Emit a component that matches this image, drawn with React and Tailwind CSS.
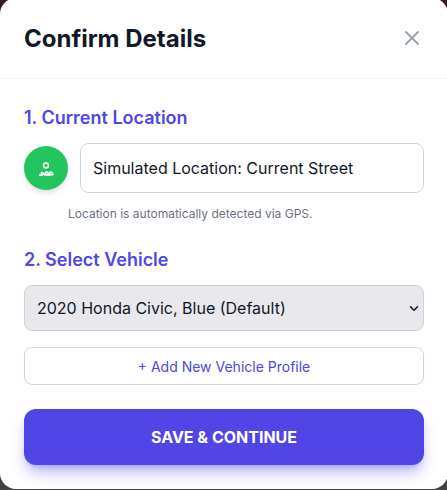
export default function App() {
  return (
    <div className="h-[490px] w-full overflow-hidden bg-linear-to-b from-[#30211e] to-[#424242] font-['Inter',sans-serif]">
      <div className="-mt-0.5 h-[491px] w-[448px] overflow-hidden rounded-2xl bg-white">
        <header className="flex items-center justify-between border-b border-[#f3f4f6] p-6">
          <h2 className="pt-0.5 text-2xl leading-[30px] font-bold text-[#111827]">Confirm Details</h2>
          <button className="text-[#9ca3af]" aria-label="Close">
            <svg className="size-6" fill="none" viewBox="0 0 24 24" stroke="currentColor" strokeWidth="2" strokeLinecap="round" strokeLinejoin="round">
              <path d="M6 18L18 6M6 6l12 12" />
            </svg>
          </button>
        </header>
        <main className="flex flex-col gap-6 p-6">
          <section>
            <h3 className="mb-[11px] pt-px text-lg font-semibold text-[#4f46e5]">1. Current Location</h3>
            <div className="flex items-center gap-3">
              <div className="flex size-11 shrink-0 items-center justify-center rounded-full bg-[#22c55e] text-white shadow-md">
                <svg className="size-5" viewBox="0 0 20 20" fill="none" stroke="currentColor" strokeLinecap="round" strokeLinejoin="round">
                  <circle cx="10" cy="7.5" r="2.4" strokeWidth="1.5" />
                  <path d="M4 16.9c1 .5 2.2.2 2.7-.8M5.4 15c1-.4 1.7.1 2.2.8s1.1 1.1 2 1" strokeWidth="2" />
                  <circle cx="10.7" cy="15.4" r="1.4" strokeWidth="1.7" />
                  <circle cx="14.9" cy="15.5" r="1.4" strokeWidth="1.7" />
                  <path d="M12.4 16.9h.8M16.7 16.4h.3" strokeWidth="1.8" />
                </svg>
              </div>
              <input className="h-[50px] min-w-0 flex-1 rounded-lg border border-[#d1d5db] p-3 text-base text-[#111827] outline-none" readOnly value="Simulated Location: Current Street" />
            </div>
            <p className="mt-[13px] -mb-px ml-11 text-xs text-[#6b7280]">Location is automatically detected via GPS.</p>
          </section>
          <section>
            <h3 className="mb-[11px] pt-px text-lg font-semibold text-[#4f46e5]">2. Select Vehicle</h3>
            <div className="relative">
              <select className="block h-[46px] w-full appearance-none rounded-lg border border-[#d1d1d9] bg-[#e8e8ed] px-3 text-base text-[#111827]">
                <option>2020 Honda Civic, Blue (Default)</option>
              </select>
              <svg className="pointer-events-none absolute top-5 right-[5px] h-[7px] w-[10px] text-[#111827]" viewBox="0 0 10 7" fill="none" stroke="currentColor" strokeWidth="1.5" strokeLinecap="round" strokeLinejoin="round">
                <path d="M1.5 1.8L5 5.3l3.5-3.5" />
              </svg>
            </div>
            <button className="mt-4 block h-[38px] w-full rounded-lg border border-[#c7d2fe] pt-0.5 text-sm text-[#4f46e5]">+ Add New Vehicle Profile</button>
          </section>
          <button className="h-14 rounded-xl bg-[#4f46e5] text-base font-bold text-white shadow-[0_10px_15px_-3px_rgba(79,70,229,0.4),0_4px_6px_-4px_rgba(79,70,229,0.4)]">SAVE &amp; CONTINUE</button>
        </main>
      </div>
    </div>
  );
}
